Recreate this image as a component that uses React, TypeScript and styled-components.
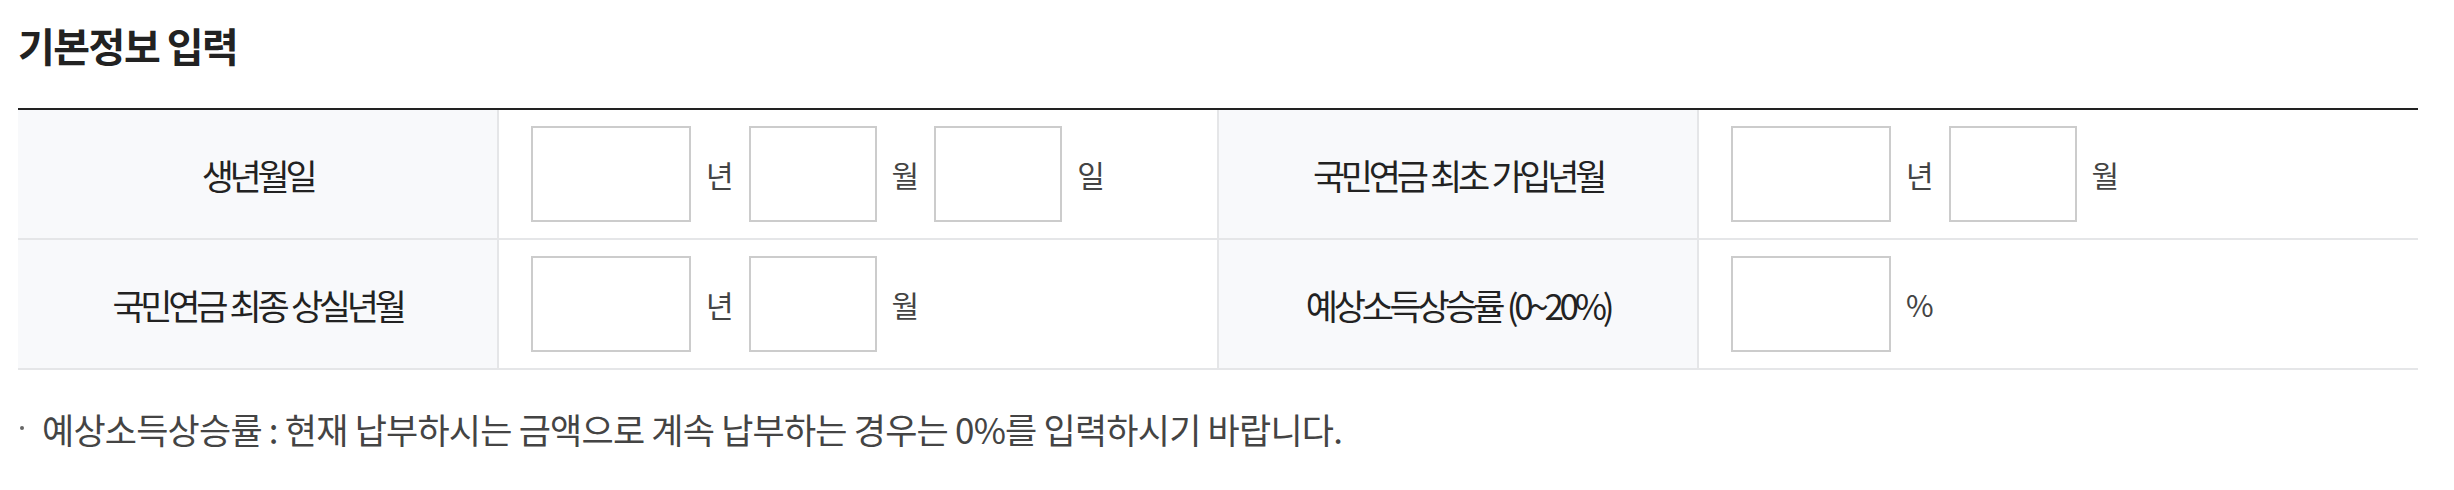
import React from 'react';
import styled, { createGlobalStyle } from 'styled-components';

const GlobalStyle = createGlobalStyle`
  body {
    margin: 8px;
    background: #fff;
    font-family: "Noto Sans CJK KR", "Noto Sans", sans-serif;
    color: #222;
  }
`;

const Wrapper = styled.div`
  width: 2400px;
  padding: 12px 0 0 10px;
`;

const Title = styled.h2`
  margin: 0;
  font-size: 40px;
  line-height: 50px;
  font-weight: 700;
  letter-spacing: -1.5px;
  color: #222;
`;

const FormGrid = styled.div`
  display: grid;
  grid-template-columns: 479px 720px 480px 721px;
  margin-top: 38px;
  border-top: 2px solid #222;
`;

const HeadCell = styled.div<{ $first?: boolean }>`
  box-sizing: border-box;
  height: 130px;
  display: flex;
  align-items: center;
  justify-content: center;
  background: #f8f9fb;
  border-bottom: 2px solid #e5e6e8;
  border-left: ${(p) => (p.$first ? 'none' : '2px solid #e5e6e8')};
  font-size: 35px;
  letter-spacing: -4.3px;
  word-spacing: 2px;
  color: #222;
`;

const DataCell = styled.div`
  box-sizing: border-box;
  height: 130px;
  display: flex;
  align-items: center;
  padding-left: 32px;
  border-bottom: 2px solid #e5e6e8;
  border-left: 2px solid #e5e6e8;
`;

const Field = styled.input<{ $wide?: boolean }>`
  box-sizing: border-box;
  width: ${(p) => (p.$wide ? '160px' : '128px')};
  height: 96px;
  border: 2px solid #ccc;
  border-radius: 0;
  background: #fff;
  padding: 0 10px;
  font-size: 28px;
  font-family: inherit;
  outline: none;
`;

const Unit = styled.span`
  margin: 0 15px;
  font-size: 30px;
  color: #444;
`;

const Notes = styled.ul`
  list-style: none;
  margin: 35px 0 0;
  padding: 0;
`;

const NoteItem = styled.li`
  position: relative;
  padding-left: 24px;
  font-size: 35px;
  line-height: 48px;
  letter-spacing: -0.8px;
  color: #444;

  &::before {
    content: '';
    position: absolute;
    left: 2px;
    top: 21px;
    width: 4px;
    height: 4px;
    border-radius: 50%;
    background: #666;
  }
`;

type Part = { wide?: boolean; unit: string };

const rows: { label: string; parts: Part[] }[][] = [
  [
    {
      label: '생년월일',
      parts: [
        { wide: true, unit: '년' },
        { unit: '월' },
        { unit: '일' },
      ],
    },
    {
      label: '국민연금 최초 가입년월',
      parts: [{ wide: true, unit: '년' }, { unit: '월' }],
    },
  ],
  [
    {
      label: '국민연금 최종 상실년월',
      parts: [{ wide: true, unit: '년' }, { unit: '월' }],
    },
    {
      label: '예상소득상승률 (0~20%)',
      parts: [{ wide: true, unit: '%' }],
    },
  ],
];

const App = () => {
  return (
    <Wrapper>
      <GlobalStyle />
      <Title>기본정보 입력</Title>
      <FormGrid>
        {rows.map((row, r) =>
          row.map((item, i) => (
            <React.Fragment key={`${r}-${i}`}>
              <HeadCell $first={i === 0}>{item.label}</HeadCell>
              <DataCell>
                {item.parts.map((part, j) => (
                  <React.Fragment key={j}>
                    <Field type="text" $wide={part.wide} />
                    <Unit>{part.unit}</Unit>
                  </React.Fragment>
                ))}
              </DataCell>
            </React.Fragment>
          ))
        )}
      </FormGrid>
      <Notes>
        <NoteItem>
          예상소득상승률 : 현재 납부하시는 금액으로 계속 납부하는 경우는 0%를 입력하시기 바랍니다.
        </NoteItem>
      </Notes>
    </Wrapper>
  );
};

export default App;
